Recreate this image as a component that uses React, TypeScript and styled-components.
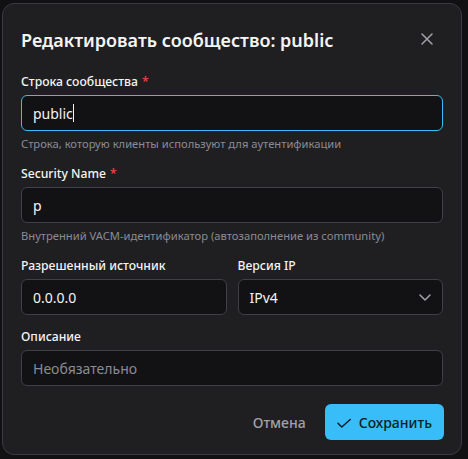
import React from "react";
import styled, { createGlobalStyle } from "styled-components";

const GlobalStyle = createGlobalStyle`
  html, body {
    margin: 0;
    padding: 0;
    background: #111113;
    font-family: "Noto Sans", "Open Sans", sans-serif;
    color: #f4f4f5;
  }
  * { box-sizing: border-box; }
`;

const Page = styled.div`
  width: 468px;
  height: 459px;
  padding: 3px 0 0 2px;
  overflow: hidden;
`;

const Dialog = styled.div`
  width: 460px;
  background: #1f1f22;
  border: 1px solid #3a3a3f;
  border-radius: 12px;
  padding: 24px 18px 14px;
`;

const Header = styled.div`
  display: flex;
  align-items: center;
  justify-content: space-between;
  height: 24px;
  margin-bottom: 20px;
`;

const Title = styled.h2`
  margin: 0;
  font-size: 18px;
  line-height: 24px;
  font-weight: 600;
  color: #f4f4f5;
`;

const CloseButton = styled.button`
  width: 24px;
  height: 24px;
  margin: 0 4px 2px 0;
  padding: 0;
  border: none;
  background: transparent;
  color: #a1a1aa;
  display: flex;
  align-items: center;
  justify-content: center;
  cursor: pointer;
`;

const Form = styled.div`
  display: flex;
  flex-direction: column;
  gap: 12px;
`;

const Row = styled.div`
  display: grid;
  grid-template-columns: 1fr 1fr;
  gap: 11px;
`;

const Field = styled.div`
  display: flex;
  flex-direction: column;
`;

const Label = styled.label`
  font-size: 12.2px;
  line-height: 20px;
  font-weight: 500;
  color: #f4f4f5;
  margin-bottom: 3px;
`;

const Required = styled.span`
  color: #ef4444;
  margin-left: 4px;
`;

const Input = styled.div<{ $focused?: boolean; $placeholder?: boolean }>`
  height: 36px;
  display: flex;
  align-items: center;
  padding: 0 11px;
  background: #121214;
  border: 1px solid ${(p) => (p.$focused ? "#38bdf8" : "#3f3f46")};
  border-radius: 6px;
  font-size: 14px;
  color: ${(p) => (p.$placeholder ? "#8b8b93" : "#f4f4f5")};
`;

const Caret = styled.span`
  display: inline-block;
  width: 1px;
  height: 18px;
  background: #f4f4f5;
`;

const SelectBox = styled(Input)`
  justify-content: space-between;
`;

const Hint = styled.div`
  font-size: 11.2px;
  line-height: 16px;
  color: #8b8b93;
  margin-top: 5px;
`;

const Footer = styled.div`
  display: flex;
  justify-content: flex-end;
  align-items: center;
  gap: 7px;
  margin-top: 18px;
`;

const GhostButton = styled.button`
  height: 36px;
  padding: 0 12px;
  border: none;
  background: transparent;
  color: #a1a1aa;
  font-family: inherit;
  font-size: 14px;
  font-weight: 500;
  border-radius: 6px;
`;

const PrimaryButton = styled.button`
  height: 36px;
  padding: 0 12px;
  margin-right: -1px;
  border: none;
  background: #38bdf8;
  color: #0f1c27;
  font-family: inherit;
  font-size: 14px;
  font-weight: 500;
  border-radius: 6px;
  display: flex;
  align-items: center;
  gap: 8px;
`;

const XIcon = () => (
  <svg width="12" height="12" viewBox="0 0 12 12" fill="none">
    <path d="M1 1L11 11M11 1L1 11" stroke="currentColor" strokeWidth="1.5" strokeLinecap="round" />
  </svg>
);

const Chevron = () => (
  <svg width="12" height="7" viewBox="0 0 12 7" fill="none">
    <path d="M1 1L6 6L11 1" stroke="#a1a1aa" strokeWidth="1.5" strokeLinecap="round" strokeLinejoin="round" />
  </svg>
);

const Check = () => (
  <svg width="14" height="14" viewBox="0 0 14 14" fill="none">
    <path d="M1 8.25L4.75 12L13.25 4.5" stroke="currentColor" strokeWidth="1.5" strokeLinecap="round" strokeLinejoin="round" />
  </svg>
);

export default function App() {
  return (
    <>
      <GlobalStyle />
      <Page>
        <Dialog>
          <Header>
            <Title>Редактировать сообщество: public</Title>
            <CloseButton aria-label="Закрыть">
              <XIcon />
            </CloseButton>
          </Header>
          <Form>
            <Field>
              <Label>
                Строка сообщества<Required>*</Required>
              </Label>
              <Input $focused>
                public<Caret />
              </Input>
              <Hint>Строка, которую клиенты используют для аутентификации</Hint>
            </Field>
            <Field>
              <Label>
                Security Name<Required>*</Required>
              </Label>
              <Input>p</Input>
              <Hint>Внутренний VACM-идентификатор (автозаполнение из community)</Hint>
            </Field>
            <Row>
              <Field>
                <Label>Разрешенный источник</Label>
                <Input>0.0.0.0</Input>
              </Field>
              <Field>
                <Label>Версия IP</Label>
                <SelectBox>
                  IPv4
                  <Chevron />
                </SelectBox>
              </Field>
            </Row>
            <Field>
              <Label>Описание</Label>
              <Input $placeholder>Необязательно</Input>
            </Field>
          </Form>
          <Footer>
            <GhostButton>Отмена</GhostButton>
            <PrimaryButton>
              <Check />
              Сохранить
            </PrimaryButton>
          </Footer>
        </Dialog>
      </Page>
    </>
  );
}
